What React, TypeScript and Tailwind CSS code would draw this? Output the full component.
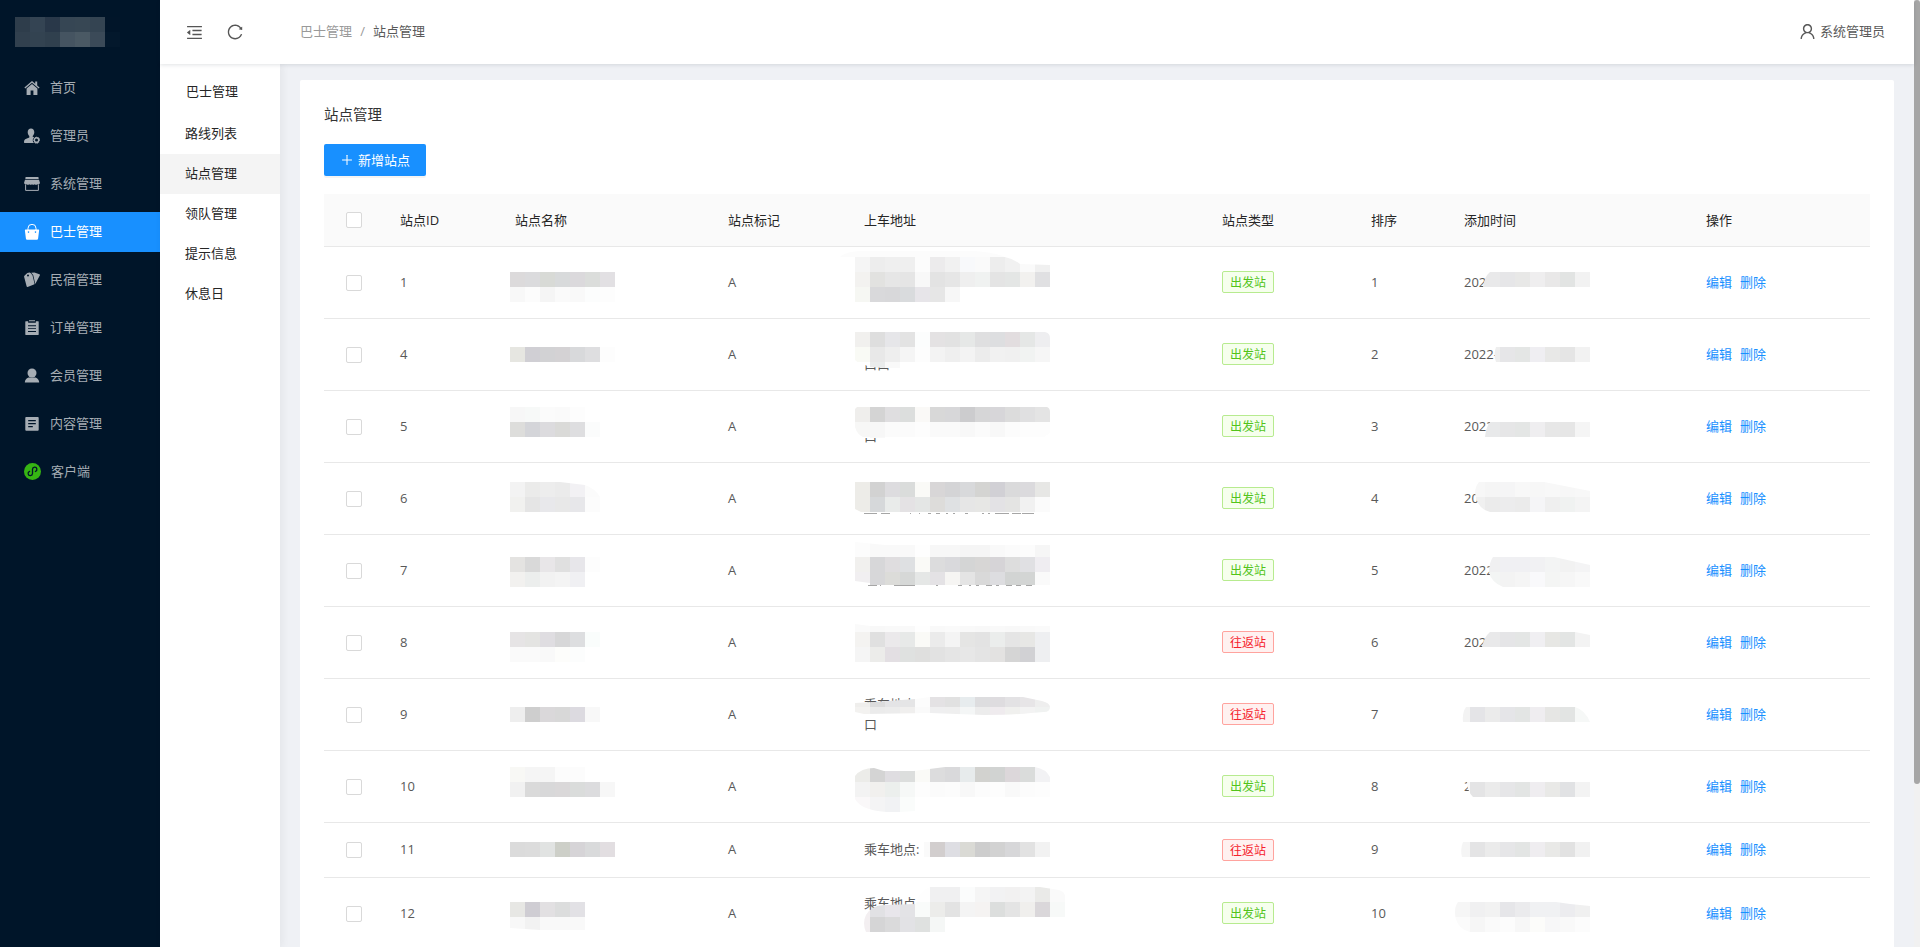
import { useId } from 'react'
import type { ReactNode } from 'react'
import { AiOutlineMenuFold, AiOutlinePlus, AiOutlineReload, AiOutlineUser } from 'react-icons/ai'
import clsx from 'clsx'

const CELL = 15

interface Patch {
  x: number
  y: number
  rows: string[]
  clip?: string
}

interface Station {
  id: number
  height: string
  address: string[]
  type: 'start' | 'round'
  sort: number
  time: string
  patches: Patch[]
  marks?: [number, number][]
}

const stations: Station[] = [
  {
    id: 1,
    height: 'h-[72px]',
    address: [],
    type: 'start',
    sort: 1,
    time: '202',
    patches: [
      { x: 186, y: 25, rows: ['dcdadb dbdbdd d8dad6 d8dadb dbd9dc dbdddb e2e0e3', 'f8f8f8 fcfcfc f5f5f5 fafafa f9f9f9 fcfdfd fdfdfd'] },
      {
        x: 531,
        y: 10,
        rows: [
          'f5f5f5 ededed efefef efefef fcfcfc ecebec f1f1f1 f8f9fb fafafa ededed f1f1f1 fafafa f0f0f0',
          'f3f2f0 e2e2e0 e6e6e6 e5e5e5 f8f8f8 e3e3e3 e6e6e6 efefef f0f2f1 e4e4e4 e4e6e5 f2f1ef e0e0e2',
          'f6f7f3 d9d9db d8d8da d9dbdd e7e5e9 e6e6e6 f7f7f7',
        ],
        clip: 'M531 10H681Q690 12 696 17L726 18V55H531Z',
      },
      { x: 516, y: -5, rows: ['fcfcfc fcfcfc fcfcfc fcfcfc fcfcfc fcfcfc fcfcfc fcfcfc fcfcfc fcfcfc fcfcfc'], clip: 'M516 10Q522 4 540 4H650Q670 5 681 10Z' },
      { x: 1146, y: 25, rows: ['e9e9ea e9e9ea e6e6e8 e8e8e7 efeeef e9e8e8 e2e4e3 f2f2f2'], clip: 'M1166 25H1266V40H1159Q1160 30 1166 25Z' },
    ],
  },
  {
    id: 4,
    height: 'h-[72px]',
    address: ['', '口口'],
    type: 'start',
    sort: 2,
    time: '2022-',
    patches: [
      { x: 186, y: 28, rows: ['e6e6e1 d0cfd4 d2d2d4 d4d2d4 d8d9db dedee0 fdfdfd'] },
      {
        x: 531,
        y: 13,
        rows: [
          'f1f0ee dedede e6e6e9 e3e3e3 fcfdfd e4e2e3 e2e2e2 e6e8e7 dfdfe0 dddee0 e2dddf e5e7e6 eeeef0',
          'f9faf5 e8e8e8 eeeeee f5f5f5 fdfdfd f3f3f3 efefef f3f3f3 ececec f1f1f1 f0f0f0 f1f3f2 f6f6f6',
          'ffffff eaecec f9f9f9',
        ],
        clip: 'M531 13H721Q726 14 726 19V43H576V49H561L546 48L541 46Q535 45 531 41Z',
      },
      { x: 1146, y: 28, rows: ['eeeeee eeeeee e6e6e8 e4e6e5 efeef2 e8e8e7 e5e5e5 f2f2f2'], clip: 'M1172 28H1266V43H1172Q1169 36 1172 28Z' },
    ],
  },
  {
    id: 5,
    height: 'h-[72px]',
    address: ['', '口'],
    type: 'start',
    sort: 3,
    time: '2022',
    patches: [
      { x: 186, y: 16, rows: ['f7f7f7 f7f9f8 fbfbfb fafafa fdfdfd', 'dddddb d4d5d9 dcdbde dadad8 dedee0 fbfcfc'] },
      {
        x: 531,
        y: 16,
        rows: [
          'efeeec d4d4d4 dfdee0 dcdedd faf9f7 d8d8d8 d7d7d9 ccccce d6d6d7 d7d6d9 dcdcdc e0e0e1 e4e4e4',
          'f7f7f6 f7f7f7 fbfbfb fbfbfb fdfdfd fafafa fafafa f8f8f8 fbfbfb f8f8f8 fcfcfc fdfdfd fdfdfd',
          'ffffff f9f9f9',
        ],
        clip: 'M533 16H723Q726 17 726 21V42L720 46H561V47H541Q533 44 531 36V18Z',
      },
      { x: 1146, y: 31, rows: ['e8e9ea e8e9ea e6e6e7 e4e6e5 efeef0 e7e7e7 e6e6e6 f5f5f5'], clip: 'M1166 31H1266V46H1161Q1162 36 1166 31Z' },
    ],
  },
  {
    id: 6,
    height: 'h-[72px]',
    address: [],
    type: 'start',
    sort: 4,
    time: '20',
    patches: [
      { x: 186, y: 19, rows: ['f3f3f3 ebebea ededed ebebeb f2f1f4 fbfbfb', 'f1f1ef e5e5e5 e8e8eb e8e8e8 e7e7ea fcfcfc'], clip: 'M186 19H236L261 22Q272 26 276 34V49H186Z' },
      {
        x: 531,
        y: 19,
        rows: [
          'edece8 d2d2d2 dddcdf dadcdb fafaf7 d8d6d7 d4d4d6 d8d9db d4d4d2 d1d0d5 dadadb dbdadd e7e7e5',
          'edece8 d6d8da e9ebea e4e2e4 e4e6e5 dddcda dfe1e3 e6e6e6 e7e7e5 e3e2e5 e4e4e3 f1f1f1 fbfbfb',
        ],
        clip: 'M531 19H726V49H537L531 46Z',
      },
      {
        x: 1146,
        y: 19,
        rows: ['f7f7f7 f5f5f5 f5f5f6 f8f8f8 f7f7f7 f8f8f8 f7f7f7 f8f8f8', 'f0f0f0 ebebeb ececed ebebeb f5f5f7 efefef f0f2f1 f4f4f4'],
        clip: 'M1155 19H1220L1266 28V49H1166Q1153 46 1151 30Q1151 24 1155 19Z',
      },
    ],
    marks: [[540, 13], [557, 9], [586, 1], [595, 1], [604, 3], [612, 4], [622, 2], [629, 2], [641, 3], [658, 2], [664, 2], [671, 14], [688, 9], [698, 12]],
  },
  {
    id: 7,
    height: 'h-[72px]',
    address: [],
    type: 'start',
    sort: 5,
    time: '2022',
    patches: [
      { x: 186, y: 22, rows: ['e4e3e1 d9d9d9 e8e6e8 e0e0e0 e7e6ea fdfdfd', 'f2f1ef eceeed f2f2f2 f4f4f4 f0f0f3'] },
      {
        x: 531,
        y: 7,
        rows: [
          'fcfcfc f9f9f9 f9f9f9 f9f9f9 fefefe f7f7f7 f7f7f7 f5f5f5 f5f5f5 f9f9f9 fbfbfb fcfcfc f6f6f6',
          'f1f0ee d7d7d9 dfdddf dee0e2 fafaf7 dcdcdd d9d9dc d4d5d5 d7d6d5 d6d4d7 dddddd e0e0e3 efedf1',
          'f1eff1 d7d7d9 dcdcd9 d6d8d7 e5e7e6 e4e2e5 f6f5f3 e4e4e4 d9d9d9 dddde0 d2d4d3 d3d5d4 fafafa',
        ],
        clip: 'M531 7L561 10H726V50H546V48L531 46Z',
      },
      {
        x: 1146,
        y: 22,
        rows: ['f0f0f1 f0f0f1 f0f0f3 f0f0f3 f1f1f3 f3f4f4 f2f2f2 f4f4f5', 'f3f5f4 f3f5f4 f3f3f3 f5f5f5 f9f9fb f4f5f4 f6f6f6 f9f9f9'],
        clip: 'M1169 22H1230L1266 30V52H1179Q1167 47 1165 37Q1165 28 1169 22Z',
      },
    ],
    marks: [[544, 9], [556, 1], [570, 13], [583, 8], [612, 2], [634, 4], [645, 2], [652, 3], [662, 6], [672, 3], [682, 6], [692, 5], [702, 6]],
  },
  {
    id: 8,
    height: 'h-[72px]',
    address: [],
    type: 'round',
    sort: 6,
    time: '202',
    patches: [
      { x: 186, y: 25, rows: ['e6e4e5 e4e4e2 dfdde1 d7d7d8 dddee0 fafdfc', 'fafafa fafafa f9f9f9 fdfdfb fcfdfd'] },
      {
        x: 531,
        y: 10,
        rows: [
          'fafafa f8f8f8 f9f9f9 f9f9f9 fefefe f9f9f9 fafafa f9f9f9 f8f8f8 f9f9f9 f8f8f8 f9f9f9 fafafa',
          'f4f3f1 e0e0e0 ebe9eb e7e9e8 fafaf7 ebebeb f4f4f4 e5e5e4 e3e3e3 ebedec e5e5e5 e7e7e5 eeeff1',
          'f5f5f5 ececea e3dfe3 dfe1e0 dfdfde e2e2e2 e5e5e5 e7e7e7 e4e4e4 e3e2e1 d5d5d5 d1d1d4 eeeff1',
        ],
        clip: 'M531 17L546 19H726V55H531Z',
      },
      { x: 1146, y: 25, rows: ['e9e9ea e9e9ea e5e5e7 e4e6e5 f0eff2 e7e7e4 e3e5e4 f3f3f3'], clip: 'M1166 25H1251L1266 28V40H1158Q1160 30 1166 25Z' },
    ],
  },
  {
    id: 9,
    height: 'h-[72px]',
    address: ['乘车地点:', '口'],
    type: 'round',
    sort: 7,
    time: '',
    patches: [
      { x: 186, y: 28, rows: ['eeeeee cecece dad8da d8d8d8 dcdae0 f8f8f8'] },
      {
        x: 531,
        y: 13,
        rows: [
          'efeeec dcdcdd e4e4e6 e5e5e6 fcfcfc e4e2e4 e1e1e1 e7ecee dddddf dedcdf e3e2e4 e7e5e7 eeeeee',
          'f3f2f0 ebebeb ececec f0efee fafafa efeff0 efefef f4f6f6 ececec efebee f0f0ee f3f3f3 f0f2f1',
        ],
        clip: 'M531 24L550 23L591 20L606 18H699L718 22Q726 24 726 28Q726 33 720 33L707 34Q690 36 660 36L606 34L540 35L531 33Z',
      },
      { x: 1131, y: 28, rows: ['f3f3f3 e4e4e7 ebebeb e5e5e8 e3e5e4 efedf0 e6e6e4 e2e4e3 f6f8f7'], clip: 'M1142 28H1251Q1261 31 1266 43H1139Q1138 34 1142 28Z' },
    ],
  },
  {
    id: 10,
    height: 'h-[72px]',
    address: [],
    type: 'start',
    sort: 8,
    time: '2',
    patches: [
      { x: 186, y: 16, rows: ['f8f8f5 f5f5f5 f5f5f5 fcfcfc fcfcfc', 'f1f1f1 dadada d8d8d9 dad8d9 dadcdb dcdcde f7f7f7'] },
      {
        x: 531,
        y: 16,
        rows: [
          'ecece9 d4d4d4 dfdde1 dcdedd fafaf7 dcdcdd d9d9db e7ebec d2d2cf d1d3d2 dcd7da dadcdb f2f2f4',
          'f3f3f3 f1f0ee ecefed f6f8f7 fdfdfd fbfbfb fcfcfc f8f8f8 fcfcfc fdfdfd f9f9f9 fcfcfc fdfdfd',
          'faf8f9 f4f4f5 f1f2f4 fafcfb',
        ],
        clip: 'M531 25Q537 17 550 17L560 20H590L621 16H711Q722 18 726 26V46H591V60Q540 65 531 48Z',
      },
      { x: 1131, y: 31, rows: ['fafafa e4e4e5 ebebeb e6e6e8 e3e5e4 efedf0 e9e9e7 e1e2e4 f3f3f3'], clip: 'M1143 31H1266V46H1149Q1146 43 1144 38Z' },
    ],
  },
  {
    id: 11,
    height: 'h-[55px]',
    address: ['乘车地点:'],
    type: 'round',
    sort: 9,
    time: '',
    patches: [
      { x: 186, y: 19, rows: ['dbdbdb dcdcdc e1e3e2 cdcfc8 d6d4d7 d9dadb e2dee1'] },
      { x: 591, y: 19, rows: ['fafafa d2cece dedee3 dadad5 cdcdcd d2d2d2 d7d7d9 e2e2e2 f2f2f2'], clip: 'M600 19H726V34H600Z' },
      { x: 1131, y: 19, rows: ['f5f5f5 e4e4e5 ebebeb e6e6e8 e3e5e4 efedf0 e9e9e7 e2e2e2 f1f1f1'], clip: 'M1139 19H1266V34H1138Q1136 26 1139 19Z' },
    ],
  },
  {
    id: 12,
    height: 'h-[72px]',
    address: ['乘车地点', ''],
    type: 'start',
    sort: 10,
    time: '',
    patches: [
      { x: 186, y: 24, rows: ['e7e7e4 cfcdd3 e2e0e2 dcdddd e2e1e5', 'f8f8f8 f2f2f2 f9f9f9 f9f9f9 f9f9f9'], clip: 'M186 24H261V52H216L186 50Z' },
      {
        x: 531,
        y: 9,
        rows: [
          'ffffff ffffff ffffff ffffff fefefe f0f0f1 f0f0f1 fbfcfc f5f5f5 f2f2f3 f2f1f1 f3f3f3 eaeae8 fafafa',
          'f3eff1 e1e1e4 e8e6eb e3e3e6 f9fbfa ececea e3e3e3 f4f4f4 f5f3f2 dcdedd e4e4e4 f0efed dad7da f7f9f8',
          'f3eff1 d5d5d6 dadadb e2e2e5 dfe1e0 f5f7f6',
        ],
        clip: 'M606 9H716L735 12Q741 14 741 18V39H621V54H542Q538 45 542 37Q548 27 560 27L592 26Q594 14 606 9Z',
      },
      {
        x: 1131,
        y: 24,
        rows: ['f6f6f6 f0f0f1 f2f2f2 e6e6e9 ebebed f0f1f3 f0f1f3 ececef f0f0f0', 'fbfbfb f6f6f6 fafafa fcfcfc f7f7f7 fcfcfa f7f7f8 f9f9f9 fcfcfc'],
        clip: 'M1134 24H1232L1246 26L1266 28V54H1146Q1131 50 1131 34Q1131 28 1134 24Z',
      },
    ],
  },
]

function PixelPatch({ patch }: { patch: Patch }) {
  const id = useId()
  return (
    <g clipPath={patch.clip ? `url(#${id})` : undefined}>
      {patch.clip && (
        <clipPath id={id}>
          <path d={patch.clip} />
        </clipPath>
      )}
      {patch.rows.map((row, r) =>
        row.split(' ').map((color, c) => (
          <rect
            key={`${r}-${c}`}
            x={patch.x + c * CELL}
            y={patch.y + r * CELL}
            width={CELL}
            height={CELL}
            fill={`#${color}`}
          />
        )),
      )}
    </g>
  )
}

function MenuIcon({ children }: { children: ReactNode }) {
  return (
    <svg viewBox="0 0 16 16" className="h-4 w-4 shrink-0" fill="currentColor">
      {children}
    </svg>
  )
}

const menus = [
  {
    label: '首页',
    icon: (
      <MenuIcon>
        <path d="M8 .9.4 7.6l.9 1L8 2.800l6.700 5.800.9-1-2.400-2.100V1.600h-2v2.100z" />
        <path d="M8 3.900 2.600 8.600V15h4v-4.600h2.800V15h4V8.600z" />
      </MenuIcon>
    ),
  },
  {
    label: '管理员',
    icon: (
      <MenuIcon>
        <path d="M7 .6c2 0 3.300 1.500 3.300 3.700 0 1.500-.7 2.900-1.600 3.600v.8l1.500.6A3.700 3.700 0 0 0 9.900 15H.6c-.5 0-.6-.3-.6-.7 0-2 .6-2.700 2.300-3.500l3-1.300v-1.600C4.300 7.200 3.700 5.800 3.700 4.300 3.700 2.100 5 .6 7 .6z" />
        <path
          fillRule="evenodd"
          d="m12.700 8.400.7.9 1.100-.2.4 1.100 1 .4-.2 1.100.3.900-.9.700.1 1.100-1.100.3-.5 1-1-.4-1 .4-.6-1-1-.3v-1.100l-.9-.8.6-.9-.1-1.100 1-.4.500-1.100 1 .2zM12.500 10.600a1.500 1.500 0 1 0 0 3 1.500 1.500 0 0 0 0-3z"
        />
      </MenuIcon>
    ),
  },
  {
    label: '系统管理',
    icon: (
      <MenuIcon>
        <path d="M2 1h12a.6.600 0 0 1 .6.600V3H1.400V1.600A.6.600 0 0 1 2 1z" />
        <path d="M1 3.800h14l1 3.200a2 2 0 0 1-2.600 1.200 2 2 0 0 1-2.700 0 2 2 0 0 1-2.700 0 2 2 0 0 1-2.700 0 2 2 0 0 1-2.700 0A2 2 0 0 1 0 7z" />
        <path d="M1.600 8.500v5.900h12.800V8.500" fill="none" stroke="currentColor" strokeWidth="1" />
      </MenuIcon>
    ),
  },
  {
    label: '巴士管理',
    icon: (
      <MenuIcon>
        <path d="M4 6V4.300a4 4 0 0 1 8 0V6" fill="none" stroke="currentColor" strokeWidth="1" />
        <path
          fillRule="evenodd"
          d="M1.600 5.500h12.800c.5 0 .8.400.7.900l-1 8c-.1.900-.7 1.400-1.500 1.400H3.400c-.8 0-1.400-.5-1.500-1.400l-1-8c-.1-.5.2-.9.700-.9zM4.500 7.300a.8.800 0 1 0 0 1.600.8.800 0 0 0 0-1.600zm7 0a.8.800 0 1 0 0 1.600.8.800 0 0 0 0-1.600z"
        />
      </MenuIcon>
    ),
  },
  {
    label: '民宿管理',
    icon: (
      <MenuIcon>
        <path
          fillRule="evenodd"
          d="M3.300.9 5.600.4c.5 0 .8.200 1 .5l1.900 2.300 2 8.400c.1.500-.1.900-.6 1l-6.300 2.300c-.5.100-.9-.1-1-.6L.1 4.800c0-.4 0-.7.3-1zM4 2.600a1 1 0 1 0 0 2 1 1 0 0 0 0-2z"
        />
        <path d="M7.200.7 10.400.4l5 1.800c.5.200.7.600.5 1.100l-4.600 8.600L9.200 3z" />
      </MenuIcon>
    ),
  },
  {
    label: '订单管理',
    icon: (
      <MenuIcon>
        <path
          fillRule="evenodd"
          d="M5 1.200V.3h6v.9h3.200c.3 0 .5.200.5.500v12.700c0 .3-.2.500-.5.500H1.800c-.3 0-.5-.2-.5-.5V1.700c0-.3.2-.5.500-.5H4.200v1.500h7.600V1.200zM4 5.300v.9h8v-.9zM4 8.200v.9h8v-.9zM4 11.100v.9h8v-.9z"
        />
      </MenuIcon>
    ),
  },
  {
    label: '会员管理',
    icon: (
      <MenuIcon>
        <circle cx="8" cy="5" r="4.500" />
        <path d="M4.500 9.600h7c2.300 1 3.600 2.600 3.700 5H.8c.1-2.400 1.400-4 3.700-5z" />
      </MenuIcon>
    ),
  },
  {
    label: '内容管理',
    icon: (
      <MenuIcon>
        <path
          fillRule="evenodd"
          d="M2.200.9h11.600c.6 0 .9.300.9.900v12c0 .6-.3.900-.9.900H2.200c-.6 0-.9-.3-.9-.9v-12c0-.6.3-.9.900-.9zM4.200 4v1.200h7.600V4zM4.200 7v1.200h7.600V7zM4.200 10v1.200h4.600V10z"
        />
      </MenuIcon>
    ),
  },
]

const subMenus = ['路线列表', '站点管理', '领队管理', '提示信息', '休息日']

const columns = [
  { title: '站点ID', width: 'w-[115px]' },
  { title: '站点名称', width: 'w-[213px]' },
  { title: '站点标记', width: 'w-[136px]' },
  { title: '上车地址', width: 'w-[358px]' },
  { title: '站点类型', width: 'w-[149px]' },
  { title: '排序', width: 'w-[93px]' },
  { title: '添加时间', width: 'w-[242px]' },
  { title: '操作', width: 'w-[180px]' },
]

const logoCells = [
  ['bg-[#2e3d4b]', 'bg-[#344453]', 'bg-[#293849]', 'bg-[#364654]', 'bg-[#374754]', 'bg-[#344452]', 'bg-[#011529]'],
  ['bg-[#31404e]', 'bg-[#334351]', 'bg-[#30404e]', 'bg-[#455461]', 'bg-[#4a5964]', 'bg-[#3b4a58]', 'bg-[#03182c]'],
]

function MiniProgramIcon() {
  return (
    <svg viewBox="0 0 17 17" className="-mt-0.5 h-[17px] w-[17px] shrink-0">
      <circle cx="8.500" cy="8.500" r="8.500" fill="#36b513" />
      <path
        d="M5.600 8.300a2.200 2.200 0 1 0 2.900 2.200V6.300a2.200 2.200 0 1 1 2.900 2.200"
        fill="none"
        stroke="#001529"
        strokeWidth="1.300"
        strokeLinecap="round"
      />
    </svg>
  )
}

function Sidebar() {
  return (
    <aside className="w-40 shrink-0 bg-[#001529] text-[#a6adb4]">
      <div className="flex h-16 flex-col pt-[17px] pl-[15px]">
        {logoCells.map((row, i) => (
          <div key={i} className="flex">
            {row.map((color, j) => (
              <span key={j} className={clsx('h-[15px] w-[15px]', color)} />
            ))}
          </div>
        ))}
      </div>
      <nav className="flex flex-col gap-2 pt-1">
        {menus.map((menu) => (
          <a
            key={menu.label}
            className={clsx('flex h-10 items-center gap-[10px] pl-6', menu.label === '巴士管理' && 'bg-[#1890ff] text-white')}
          >
            {menu.icon}
            <span className="-mt-0.5">{menu.label}</span>
          </a>
        ))}
        <a className="flex h-10 items-center gap-[10px] pl-6">
          <MiniProgramIcon />
          <span className="-mt-0.5">客户端</span>
        </a>
      </nav>
    </aside>
  )
}

function Header() {
  return (
    <header className="relative z-20 flex h-16 shrink-0 items-center bg-white pr-[29px] pl-[25px] shadow-[0_1px_4px_rgba(0,21,41,0.12)]">
      <AiOutlineMenuFold className="h-[19px] w-[19px] text-[#555]" />
      <AiOutlineReload className="ml-[22px] h-[18px] w-[18px] text-[#555]" />
      <div className="ml-14 flex items-center pb-0.5 text-[#999]">
        <span>巴士管理</span>
        <span className="w-[21px] text-center">/</span>
        <span className="text-[#595959]">站点管理</span>
      </div>
      <div className="ml-auto flex items-center gap-[3px] pb-0.5 text-[#595959]">
        <AiOutlineUser className="h-[19px] w-[19px]" />
        系统管理员
      </div>
    </header>
  )
}

function SubMenu() {
  return (
    <aside className="relative z-10 w-[120px] shrink-0 bg-white text-[#262626] shadow-[2px_0_8px_rgba(29,35,41,0.06)]">
      <div className="flex h-[50px] items-center pt-1 pl-[26px]">巴士管理</div>
      {subMenus.map((item) => (
        <a key={item} className={clsx('flex h-10 items-center pb-0.5 pl-[25px]', item === '站点管理' && 'bg-[#f4f4f4]')}>
          {item}
        </a>
      ))}
    </aside>
  )
}

function Checkbox() {
  return <span className="h-4 w-4 rounded-[2px] border border-[#d9d9d9] bg-white" />
}

function TypeTag({ type }: { type: Station['type'] }) {
  return (
    <span
      className={clsx(
        'flex h-[22px] w-[52px] items-center justify-center rounded-[2px] border pt-0.5 text-xs',
        type === 'start' ? 'border-[#b7eb8f] bg-[#f6ffed] text-[#52c41a]' : 'border-[#ffa39e] bg-[#fff1f0] text-[#f5222d]',
      )}
    >
      {type === 'start' ? '出发站' : '往返站'}
    </span>
  )
}

function StationRow({ station }: { station: Station }) {
  return (
    <div className={clsx('relative flex items-center border-b border-[#e8e8e8] text-[#595959]', station.height)}>
      <div className="flex w-[60px] justify-center">
        <Checkbox />
      </div>
      <div className="w-[115px] px-4 pb-0.5">{station.id}</div>
      <div className="w-[213px] px-4" />
      <div className="w-[136px] px-4 pb-0.5">A</div>
      <div className="w-[358px] px-4 pb-0.5">
        {station.address.map((line, i) => (
          <div key={i} className="h-5 leading-5">
            {line}
          </div>
        ))}
      </div>
      <div className="w-[149px] px-4 pb-px">
        <TypeTag type={station.type} />
      </div>
      <div className="w-[93px] px-4 pb-0.5">{station.sort}</div>
      <div className="w-[242px] px-4 pb-0.5">{station.time}</div>
      <div className="flex w-[180px] gap-2 px-4 pb-0.5 text-[#1890ff]">
        <a>编辑</a>
        <a>删除</a>
      </div>
      <svg className="pointer-events-none absolute top-0 left-0 h-full w-[1546px]">
        {station.patches.map((patch, i) => (
          <PixelPatch key={i} patch={patch} />
        ))}
        {station.marks?.map(([x, w]) => (
          <rect key={x} x={x} y={50} width={w} height={1} fill="#a6a6a6" />
        ))}
      </svg>
    </div>
  )
}

export default function App() {
  return (
    <div className="flex h-[947px] w-[1920px] overflow-hidden bg-[#eff1f5] font-['Open_Sans','Noto_Sans_CJK_SC',sans-serif] text-[13px] leading-5">
      <Sidebar />
      <div className="flex w-[1754px] shrink-0 flex-col">
        <Header />
        <div className="flex min-h-0 flex-1">
          <SubMenu />
          <main className="min-w-0 flex-1 px-5 pt-4">
            <section className="h-[1000px] rounded-[2px] bg-white px-6 pt-[25px]">
              <h1 className="text-[14.5px] leading-5 text-[#333]">站点管理</h1>
              <button className="mt-[19px] flex h-8 w-[102px] items-center gap-1 rounded-[2px] bg-[#1890ff] pl-4 text-white shadow-[0_2px_0_rgba(0,0,0,0.045)]">
                <AiOutlinePlus className="h-3.5 w-3.5" />
                <span className="-mt-px">新增站点</span>
              </button>
              <div className="mt-[18px]">
                <div className="flex h-[53px] items-center border-b border-[#e8e8e8] bg-[#fafafa] text-[#262626]">
                  <div className="flex w-[60px] justify-center">
                    <Checkbox />
                  </div>
                  {columns.map((column) => (
                    <div key={column.title} className={clsx('px-4 pb-px', column.width)}>
                      {column.title}
                    </div>
                  ))}
                </div>
                {stations.map((station) => (
                  <StationRow key={station.id} station={station} />
                ))}
              </div>
            </section>
          </main>
        </div>
      </div>
      <div className="w-1.5 shrink-0 bg-[#f1f1f1]">
        <div className="h-[784px] rounded-[3px] bg-[#a6a6a6]" />
      </div>
    </div>
  )
}
